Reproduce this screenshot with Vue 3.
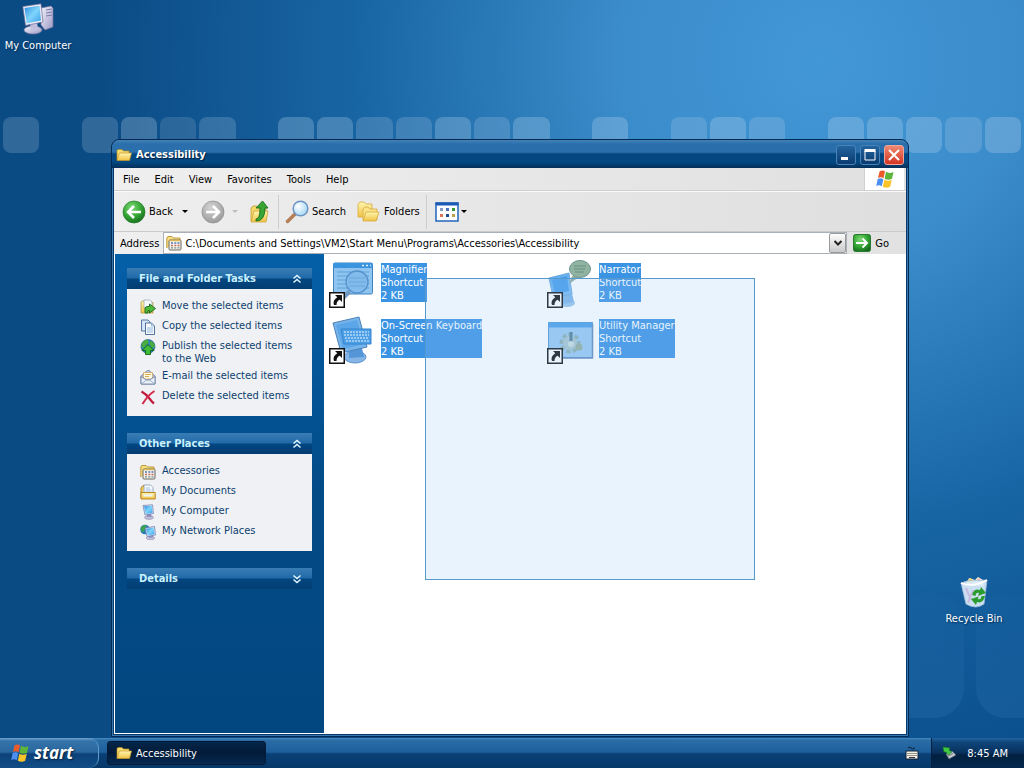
<template>
  <div class="screen">
    <!-- Shared icon shapes -->
    <svg class="sprite" aria-hidden="true">
      <defs>
        <linearGradient id="gFolder" x1="0" y1="0" x2="0" y2="1">
          <stop offset="0" stop-color="#fff6b0" />
          <stop offset="1" stop-color="#efc244" />
        </linearGradient>
        <linearGradient id="gScreen" x1="0" y1="0" x2="1" y2="1">
          <stop offset="0" stop-color="#2f8fe0" />
          <stop offset="0.5" stop-color="#7fd4fb" />
          <stop offset="1" stop-color="#3aa0ea" />
        </linearGradient>
        <linearGradient id="gCase" x1="0" y1="0" x2="1" y2="1">
          <stop offset="0" stop-color="#f6f5fc" />
          <stop offset="1" stop-color="#9a97c4" />
        </linearGradient>
        <radialGradient id="gGreen" cx="0.4" cy="0.3" r="0.75">
          <stop offset="0" stop-color="#7fd878" />
          <stop offset="0.55" stop-color="#35a835" />
          <stop offset="1" stop-color="#156a1c" />
        </radialGradient>
        <radialGradient id="gGray" cx="0.4" cy="0.3" r="0.75">
          <stop offset="0" stop-color="#d4d4d4" />
          <stop offset="1" stop-color="#989898" />
        </radialGradient>
        <radialGradient id="gLens" cx="0.35" cy="0.35" r="0.7">
          <stop offset="0" stop-color="#ffffff" />
          <stop offset="1" stop-color="#a4d8f4" />
        </radialGradient>
        <linearGradient id="gSelected" x1="0" y1="0" x2="1" y2="1">
          <stop offset="0" stop-color="#58a8ee" />
          <stop offset="1" stop-color="#83c0f2" />
        </linearGradient>
      </defs>

      <symbol id="folder" viewBox="0 0 16 16">
        <path d="M1 13V3.5L2 2.5H6L7.5 4H13V6" fill="#f7dc72" stroke="#b58a1d" stroke-width=".7" />
        <path d="M1 13.5L3.5 6H15.5L13.5 13.5Z" fill="url(#gFolder)" stroke="#c79a28" stroke-width=".7" />
      </symbol>

      <symbol id="programs" viewBox="0 0 16 16">
        <path d="M.8 13V2.5L2 1.5H6L7.5 3H14V6" fill="#f8df83" stroke="#b8902d" stroke-width=".9" />
        <rect x="3" y="5" width="12" height="10" rx="1" fill="#f3f3ee" stroke="#68675c" />
        <path d="M3.5 5.5H14.5" stroke="#d9b652" stroke-width="1.4" />
        <path d="M5 8H7M8.3 8H10.3M11.5 8H13.5" stroke="#5a78b8" stroke-width="1.6" />
        <path d="M5 10.5H7M8.3 10.5H10.3M11.5 10.5H13.5" stroke="#cc6a55" stroke-width="1.5" />
        <path d="M5 12.8H7M8.3 12.8H10.3M11.5 12.8H13.5" stroke="#728f8d" stroke-width="1.3" />
      </symbol>

      <symbol id="flag" viewBox="0 0 20 20">
        <path d="M4.5 2.5C6.5 1 8.5 1.3 10 2.3L8.5 9.3C6.7 8 5 8 3 9Z" fill="#ec5a2c" />
        <path d="M11 2.8C13.2 4.3 15.5 4.2 18.5 3L17 9.8C14.5 11 12 11 9.6 9.7Z" fill="#5fb53a" />
        <path d="M2.7 10C4.8 9 6.6 9 8.3 10.3L6.8 17.2C5 16 3.2 15.9 1.2 16.9Z" fill="#4d8ff0" />
        <path d="M9.3 10.7C11.8 12 14.2 12 16.8 10.8L15.2 17.7C12.8 19 10.3 19 7.8 17.7Z" fill="#fbc52a" />
      </symbol>

      <symbol id="computer" viewBox="0 0 32 32">
        <path d="M19 5L29 3L31 5V24L23 27L19 22Z" fill="url(#gCase)" stroke="#6f6d9c" stroke-width=".7" />
        <path d="M24 7L30 6M24 10L30 9M24 13L30 12" stroke="#716fa0" stroke-width=".9" />
        <ellipse cx="11" cy="27" rx="9" ry="4" fill="url(#gCase)" stroke="#77759f" stroke-width=".7" />
        <path d="M8 20L15 19L16 26L9 27Z" fill="#c3c0df" />
        <path d="M.8 3.5L19 .8L21 19L3.5 22.5Z" fill="#eceaf7" stroke="#6c6c98" stroke-width=".7" />
        <path d="M2.5 5L17.5 2.8L19 17.5L4.7 20.3Z" fill="url(#gScreen)" />
      </symbol>

      <symbol id="monitor" viewBox="0 0 16 16">
        <ellipse cx="9" cy="13.5" rx="4.5" ry="1.9" fill="#c1bfda" stroke="#7f7da4" stroke-width=".5" />
        <path d="M7 9H11L11.5 13H7Z" fill="#8f91bc" />
        <path d="M3 1.5L12.5 .8L13.5 9.5L5 11Z" fill="#e3e4f3" stroke="#6777a8" stroke-width=".7" />
        <path d="M4 2.3L11.8 1.8L12.6 8.8L5.7 10Z" fill="url(#gScreen)" />
      </symbol>

      <symbol id="move" viewBox="0 0 16 16">
        <path d="M1 14V3L2.5 2H6L7.5 3.5H13V14Z" fill="url(#gFolder)" stroke="#aa8f45" stroke-width=".7" />
        <path d="M4 1L10 1L12 3V9H4Z" fill="#f6f7fb" stroke="#8e93a4" stroke-width=".6" />
        <path d="M5 14V9.5Q5 7.5 8 7.5H9.5V5L15.5 9.5L9.5 14V11.5H8V14Z" fill="#4fb93c" stroke="#17691b" stroke-width=".9" />
      </symbol>

      <symbol id="copy" viewBox="0 0 16 16">
        <path d="M1.5 1H8L10 3V12H1.5Z" fill="#d5e6f8" stroke="#4b6c96" stroke-width=".9" />
        <path d="M5.5 4H11.5L14.5 7V15.5H5.5Z" fill="#f8fcff" stroke="#3f638f" stroke-width=".9" />
        <path d="M11.5 4V7H14.5M7 9H13M7 11H13M7 13H13" fill="none" stroke="#7ba5cf" stroke-width=".8" />
      </symbol>

      <symbol id="publish" viewBox="0 0 16 16">
        <circle cx="8" cy="7.5" r="7" fill="#2a7fc4" stroke="#1c5a78" stroke-width=".6" />
        <path d="M2 4Q5 0 8 1L9 4L6 6L4 9L1.5 8ZM10 2Q15 3 14.8 8L12 9L10 6Z" fill="#49ac3c" />
        <path d="M8 5.5L14 11.5H10.5V15.5H5.5V11.5H2Z" fill="#3fbb34" stroke="#126119" stroke-width=".9" />
      </symbol>

      <symbol id="mail" viewBox="0 0 16 16">
        <path d="M1 7L7.5 1.5H9L15 7V15H1Z" fill="#b7cae3" stroke="#65779d" stroke-width=".8" />
        <path d="M3.5 3.5H12.5V10H3.5Z" fill="#fffbe2" stroke="#c79c54" stroke-width=".7" />
        <path d="M5 5.5H11M5 7.5H9" stroke="#e0aa48" />
        <path d="M1 7.5L6.5 11H9.5L15 7.5V15H1Z" fill="#eaf1fb" stroke="#65779d" stroke-width=".8" />
        <path d="M1.5 14.8L6.5 11M14.5 14.8L9.5 11" stroke="#8397b9" stroke-width=".7" />
      </symbol>

      <symbol id="delete" viewBox="0 0 16 16">
        <path d="M1.5 2.5Q6 5 9 9T14 14.5" fill="none" stroke="#c2183b" stroke-width="2.2" />
        <path d="M14.5 2Q8 6 2.5 15" fill="none" stroke="#d42a4c" stroke-width="2" />
      </symbol>

      <symbol id="documents" viewBox="0 0 16 16">
        <path d="M1 14V4L3 1.5H5" fill="#f5ce5a" stroke="#b38320" />
        <path d="M4 1H10.5L13 3.5V10H4Z" fill="#fbfdff" stroke="#7d95b5" stroke-width=".8" />
        <path d="M5.5 4H10M5.5 6H11.5M5.5 8H11.5" stroke="#86a9d0" stroke-width=".8" />
        <path d="M1 8.5H15.2V15H1Z" fill="url(#gFolder)" stroke="#b98722" />
        <path d="M3.5 10.5H12.5V12.5H3.5Z" fill="#eef4fb" />
      </symbol>

      <symbol id="network" viewBox="0 0 16 16">
        <circle cx="5" cy="5.5" r="4.8" fill="#277dbb" />
        <path d="M1 3Q4 0 7 1.5L5 4L4 8L1 7Z" fill="#3fa450" />
        <ellipse cx="10.5" cy="14" rx="4.3" ry="1.7" fill="#cac8e0" stroke="#7977a0" stroke-width=".5" />
        <path d="M9 10H13V14H9Z" fill="#9599c2" />
        <path d="M5 4L14.5 2.5L15.5 11L7 12.5Z" fill="#e7e8f6" stroke="#6474a5" stroke-width=".7" />
        <path d="M6 4.8L13.7 3.6L14.5 10.3L7.8 11.5Z" fill="url(#gScreen)" />
      </symbol>

      <symbol id="arrow-badge" viewBox="0 0 16 16">
        <rect x=".75" y=".75" width="14.5" height="14.5" fill="#fff" stroke="#111" stroke-width="1.5" />
        <path d="M6 3H13V10L10.8 7.8Q7.5 9 7.5 13H5Q3.2 8.500 8.3 5.3Z" fill="#111" />
      </symbol>

      <symbol id="magnifier" viewBox="0 0 48 48">
        <rect x="4.5" y="3" width="39" height="31" rx="1.5" fill="#8fc4f0" stroke="#3f83bf" />
        <rect x="4.5" y="3" width="39" height="5" fill="#3b94de" />
        <path d="M33 5.5H35M37 5.5H39M41 5.5H42" stroke="#d9efff" stroke-width="1.5" />
        <path d="M8 12H40M8 16H40M8 20H40M8 24H40M8 28H40" stroke="#5ba3da" />
        <path d="M19 30L11 38L14 41L22 33Z" fill="#6f99c2" />
        <circle cx="28" cy="22" r="11" fill="#84bced" fill-opacity=".85" stroke="#5591ca" stroke-width="1.3" />
        <path d="M20 18H36M19 22H37M20 26H36" stroke="#66a5da" />
      </symbol>

      <symbol id="keyboard" viewBox="0 0 48 48">
        <ellipse cx="26" cy="41" rx="11" ry="6" fill="#84b5e6" stroke="#5b92cc" />
        <path d="M20 30L32 28L35 41L20 42Z" fill="#5596d8" />
        <path d="M4 7L30 1L38 31L12 37Z" fill="#78b4e8" stroke="#4a83bd" />
        <path d="M7 9L28 4L35 28L14 33Z" fill="#5aa6e8" />
        <path d="M12 13H42V28H15Z" fill="#4f9fe6" stroke="#3484cf" />
        <path d="M15 16H40M15 19H40M16 22H40M17 25H40" stroke="#b3dafa" stroke-width="1.4" stroke-dasharray="2 1" />
      </symbol>

      <symbol id="narrator" viewBox="0 0 48 48">
        <ellipse cx="20" cy="43" rx="8" ry="4" fill="#99c4ea" />
        <path d="M16 31L24 29L27 42L16 44Z" fill="#7fb6e8" />
        <path d="M2 18L22 13L25 34L6 37Z" fill="url(#gSelected)" stroke="#6ba8de" />
        <path d="M5 20L20 16L22 31L8 34Z" fill="#459ceb" />
        <path d="M25 16L22 24L32 17Z" fill="#8eab9c" />
        <ellipse cx="33" cy="9" rx="10.5" ry="8.5" fill="#91b4a0" stroke="#6d9496" />
        <path d="M27 6H39M27 9H38M28 12H37" stroke="#648e88" />
      </symbol>

      <symbol id="utility" viewBox="0 0 48 48">
        <rect x="1.5" y="6.5" width="44" height="35" fill="#9acaf3" stroke="#5397d0" />
        <rect x="1.5" y="6.5" width="44" height="5" fill="#4a9ee8" />
        <path d="M45.5 8V42H6" fill="none" stroke="#6289bc" stroke-width="1.5" />
        <circle cx="23" cy="27" r="8" fill="none" stroke="#8fb0b4" stroke-width="5" stroke-dasharray="4 2" />
        <circle cx="23" cy="27" r="7" fill="#a9c4cd" />
        <path d="M24 16V27" stroke="#527d9a" stroke-width="3" />
        <circle cx="24" cy="28" r="3" fill="#c9dedb" />
        <circle cx="32" cy="31" r="3.5" fill="#91ae9d" />
      </symbol>
    </svg>

    <main class="desktop">
      <div class="tiles" aria-hidden="true">
        <span v-for="(tone, i) in tiles" :key="i" :class="['tile', 'tone-' + tone]"></span>
      </div>
      <div class="big-tiles" aria-hidden="true"><span></span><span></span></div>

      <button class="shortcut computer" type="button">
        <svg viewBox="0 0 32 32"><use href="#computer" /></svg>
        My Computer
      </button>

      <button class="shortcut bin" type="button">
        <svg viewBox="0 0 32 32">
          <path d="M8 9L11 2L17 4L20 1L25 4L26 10Z" fill="#fbf4d8" />
          <path d="M8 6L13 2L16 8Z" fill="#f2cf51" />
          <path d="M19 3L22 2L24 7L20 8Z" fill="#efb9bd" />
          <path d="M3 7L9 5L29 4L26 28Q18 34 8 28Z" fill="#dbeafa" fill-opacity=".92" stroke="#a3bfdc" stroke-width=".8" />
          <path d="M3 7Q16 12 29 4" fill="none" stroke="#fff" stroke-width="1.6" />
          <path d="M8 12L13 24M10 27L15 14" stroke="#c9badf" stroke-width="2" />
          <path d="M14 19Q16 12 22 14L23 11L28 17L20 20L21 17Q18 16 17.5 20Z" fill="#2b9c2f" />
          <path d="M27 20Q25 28 19 26L18 29L13 23L20.5 20.5L20 23Q23 24 23.5 20Z" fill="#2b9c2f" />
        </svg>
        Recycle Bin
      </button>

      <section class="window" aria-label="Accessibility">
        <header class="titlebar">
          <svg class="icon16"><use href="#folder" /></svg>
          <h1>Accessibility</h1>
          <button type="button" class="frame-btn" aria-label="Minimize">
            <svg viewBox="0 0 18 18"><path d="M4 12.5H11" stroke="#fff" stroke-width="3" /></svg>
          </button>
          <button type="button" class="frame-btn" aria-label="Maximize">
            <svg viewBox="0 0 18 18"><path d="M4 5H14V14H4Z" fill="none" stroke="#fff" /><path d="M3.5 4.5H14.5" stroke="#fff" stroke-width="3" /></svg>
          </button>
          <button type="button" class="frame-btn close" aria-label="Close">
            <svg viewBox="0 0 18 18"><path d="M4 4L14 14M14 4L4 14" stroke="#fff" stroke-width="2" /></svg>
          </button>
        </header>

        <nav class="menubar">
          <button v-for="item in menu" :key="item" type="button">{{ item }}</button>
          <span class="brand"><svg viewBox="0 0 20 20"><use href="#flag" /></svg></span>
        </nav>

        <div class="toolbar">
          <button type="button" class="tool">
            <svg class="icon24" viewBox="0 0 24 24">
              <circle cx="12" cy="12" r="11" fill="url(#gGreen)" stroke="#277a2b" stroke-width=".7" />
              <path d="M19 12H6.5M12 6L6 12L12 18" fill="none" stroke="#fff" stroke-width="2.6" />
            </svg>
            Back
          </button>
          <button type="button" class="drop" aria-label="Back history"><i class="caret"></i></button>
          <button type="button" class="tool forward" aria-label="Forward">
            <svg class="icon24" viewBox="0 0 24 24">
              <circle cx="12" cy="12" r="11" fill="url(#gGray)" stroke="#8d8d8d" stroke-width=".7" />
              <path d="M5 12H17.5M12 6L18 12L12 18" fill="none" stroke="#fff" stroke-width="2.6" />
            </svg>
          </button>
          <button type="button" class="drop off" aria-label="Forward history"><i class="caret"></i></button>
          <button type="button" class="tool up" aria-label="Up">
            <svg class="icon24" viewBox="0 0 24 24">
              <path d="M3 21V8L5 6H9L11 8H18V20Z" fill="#f4d769" stroke="#c39c36" stroke-width=".8" />
              <path d="M3 22L6 11H20L18 22Z" fill="url(#gFolder)" stroke="#cba43c" stroke-width=".8" />
              <path d="M8 19Q12 19 12 8H8L14.5 1L20 8H17Q17 21 8 21Z" fill="#38a534" stroke="#1b6f20" stroke-width=".9" />
            </svg>
          </button>
          <span class="divider"></span>
          <button type="button" class="tool">
            <svg class="icon24" viewBox="0 0 24 24">
              <path d="M10 14L2.5 21.5" stroke="#b58057" stroke-width="3.5" stroke-linecap="round" />
              <circle cx="15.5" cy="8.5" r="7.3" fill="url(#gLens)" stroke="#6d94c4" stroke-width="1.5" />
            </svg>
            Search
          </button>
          <button type="button" class="tool folders">
            <svg class="icon24" viewBox="0 0 24 24">
              <path d="M1 17V4L3 2H7L9 4H15V17Z" fill="url(#gFolder)" stroke="#d9a93a" stroke-width=".8" />
              <path d="M6 20V9L8 7H11L13 9H20V20Z" fill="#f9e28a" stroke="#d9a93a" stroke-width=".8" />
              <path d="M6 21L9 12H22L19 21Z" fill="url(#gFolder)" stroke="#d9a93a" stroke-width=".8" />
            </svg>
            Folders
          </button>
          <span class="divider"></span>
          <button type="button" class="tool views" aria-label="Views">
            <svg class="icon24" viewBox="0 0 24 24">
              <rect x="1" y="3" width="22" height="18" fill="#fff" stroke="#2266bb" stroke-width="1.5" />
              <path d="M.5 4H23.5" stroke="#1c5ab4" stroke-width="3" />
              <path d="M5 9.5H8" stroke="#8b9ac4" stroke-width="3" />
              <path d="M11 9.5H14" stroke="#4b72bf" stroke-width="3" />
              <path d="M17 9.5H20" stroke="#389637" stroke-width="3" />
              <path d="M5 15.5H8" stroke="#db765c" stroke-width="3" />
              <path d="M11 15.5H14" stroke="#1c4b90" stroke-width="3" />
              <path d="M17 15.5H20" stroke="#bda447" stroke-width="3" />
            </svg>
            <i class="caret"></i>
          </button>
        </div>

        <form class="address" @submit.prevent>
          <label for="path">Address</label>
          <div class="field">
            <svg class="icon16"><use href="#programs" /></svg>
            <input id="path" v-model="path" type="text" spellcheck="false" />
            <button type="button" class="combo" aria-label="Show addresses">
              <svg viewBox="0 0 10 10"><path d="M1.5 3L5 6.5L8.5 3" fill="none" stroke="#222" stroke-width="2" /></svg>
            </button>
          </div>
          <button type="submit" class="go">
            <svg viewBox="0 0 18 18">
              <rect x=".5" y=".5" width="17" height="17" rx="2" fill="url(#gGreen)" stroke="#2b7b2f" />
              <path d="M3 9H14M9.5 4.5L14 9L9.5 13.5" fill="none" stroke="#fff" stroke-width="2" />
            </svg>
            Go
          </button>
        </form>

        <div class="body">
          <aside class="sidebar">
            <section v-for="panel in panels" :key="panel.title" class="panel">
              <h2>
                <button type="button" @click="panel.open = !panel.open">
                  {{ panel.title }}
                  <svg :class="{ down: !panel.open }" viewBox="0 0 10 10">
                    <path d="M1.5 4.5L5 1.5L8.5 4.5M1.5 8.5L5 5.5L8.5 8.5" fill="none" stroke="#e2f8ff" stroke-width="1.5" />
                  </svg>
                </button>
              </h2>
              <ul v-if="panel.open">
                <li v-for="link in panel.links" :key="link.text">
                  <a href="#" @click.prevent>
                    <svg class="icon16"><use :href="'#' + link.icon" /></svg>
                    <span>{{ link.text }}</span>
                  </a>
                </li>
              </ul>
            </section>
          </aside>

          <div class="content">
            <ul class="files">
              <li v-for="file in files" :key="file.name">
                <span class="file-icon">
                  <svg viewBox="0 0 48 48"><use :href="'#' + file.icon" /></svg>
                  <svg class="badge"><use href="#arrow-badge" /></svg>
                </span>
                <span class="file-label">{{ file.name }}<br />Shortcut<br />2 KB</span>
              </li>
            </ul>
            <div class="marquee"></div>
          </div>
        </div>
      </section>
    </main>

    <footer class="taskbar">
      <button type="button" class="start">
        <svg viewBox="0 0 20 20"><use href="#flag" /></svg>
        start
      </button>
      <button type="button" class="task">
        <svg class="icon16"><use href="#folder" /></svg>
        Accessibility
      </button>
      <svg class="lang" viewBox="0 0 14 14">
        <path d="M3 2Q5 0 6 2T10 2" fill="none" stroke="#061c33" />
        <rect x="1" y="5" width="12" height="8" fill="#f4f2e4" stroke="#10243a" />
        <path d="M2.5 7.5H12M2.5 9.5H12" stroke="#333" stroke-dasharray="1 1" />
        <path d="M4 11.5H10" stroke="#333" />
      </svg>
      <div class="tray">
        <svg class="icon16" viewBox="0 0 16 16">
          <path d="M5 9L11 6L15 10L8 14Z" fill="#c5cad2" stroke="#59636e" stroke-width=".7" />
          <path d="M7 11L12 8.5" stroke="#69727c" />
          <path d="M2 2L9 3L8 5L11 7L7 10L5 7L3 7Z" fill="#43c643" stroke="#187d24" stroke-width=".6" />
        </svg>
        <time>8:45 AM</time>
      </div>
    </footer>
  </div>
</template>

<script setup>
import { ref } from 'vue';

const path = ref('C:\\Documents and Settings\\VM2\\Start Menu\\Programs\\Accessories\\Accessibility');

const menu = ['File', 'Edit', 'View', 'Favorites', 'Tools', 'Help'];

// 0 = empty, 1 = faint, 2 = medium, 3 = bright
const tiles = [2, 0, 2, 3, 1, 2, 0, 3, 3, 2, 2, 3, 2, 3, 0, 3, 0, 2, 3, 2, 0, 3, 3, 3, 2, 3];

const panels = ref([
  {
    title: 'File and Folder Tasks',
    open: true,
    links: [
      { icon: 'move', text: 'Move the selected items' },
      { icon: 'copy', text: 'Copy the selected items' },
      { icon: 'publish', text: 'Publish the selected items to the Web' },
      { icon: 'mail', text: 'E-mail the selected items' },
      { icon: 'delete', text: 'Delete the selected items' },
    ],
  },
  {
    title: 'Other Places',
    open: true,
    links: [
      { icon: 'programs', text: 'Accessories' },
      { icon: 'documents', text: 'My Documents' },
      { icon: 'monitor', text: 'My Computer' },
      { icon: 'network', text: 'My Network Places' },
    ],
  },
  { title: 'Details', open: false, links: [] },
]);

const files = [
  { icon: 'magnifier', name: 'Magnifier' },
  { icon: 'narrator', name: 'Narrator' },
  { icon: 'keyboard', name: 'On-Screen Keyboard' },
  { icon: 'utility', name: 'Utility Manager' },
];
</script>

<style>
body {
  margin: 0;
}
</style>

<style scoped>
.screen {
  display: flex;
  flex-direction: column;
  min-height: 100vh;
  font-family: Tahoma, "DejaVu Sans Condensed", sans-serif;
  font-size: 11px;
  line-height: 13px;
  color: #000;
}

.sprite {
  position: absolute;
  width: 0;
  height: 0;
}

button {
  margin: 0;
  padding: 0;
  border: 0;
  background: none;
  font: inherit;
  color: inherit;
}

ul {
  margin: 0;
  padding: 0;
  list-style: none;
}

svg {
  display: block;
  flex: none;
}

.icon16 {
  width: 16px;
  height: 16px;
}

.icon24 {
  width: 24px;
  height: 24px;
}

/* Desktop */
.desktop {
  position: relative;
  flex: 1;
  overflow: hidden;
  background:
    radial-gradient(ellipse 720px 720px at 820px 60px, #4297d6 0%, #3b8cca 28%, rgba(29, 109, 172, 0.75) 65%, rgba(12, 78, 136, 0) 100%),
    linear-gradient(90deg, #0b4b84, #0a4f8e);
}

.tiles {
  display: grid;
  grid-template-columns: repeat(26, 1fr);
  gap: 3px;
  padding: 117px 3px 0;
}

.tile {
  height: 36px;
  border-radius: 8px;
}

.tone-1 {
  background: rgba(255, 255, 255, 0.12);
}

.tone-2 {
  background: rgba(200, 220, 240, 0.2);
}

.tone-3 {
  background: rgba(200, 225, 245, 0.26);
}

.big-tiles {
  position: absolute;
  right: -66px;
  bottom: 20px;
  display: flex;
  gap: 12px;
}

.big-tiles span {
  width: 114px;
  height: 124px;
  border-radius: 30px;
  background: linear-gradient(rgba(90, 160, 215, 0.02), rgba(90, 160, 215, 0.12));
}

.shortcut {
  position: absolute;
  display: flex;
  flex-direction: column;
  align-items: center;
  gap: 4px;
  width: 76px;
  color: #fff;
  text-shadow: 1px 1px 2px #002a52;
}

.shortcut svg {
  width: 32px;
  height: 32px;
}

.computer {
  left: 0;
  top: 3px;
}

.bin {
  right: 12px;
  top: 576px;
}

/* Window */
.window {
  position: absolute;
  top: 139px;
  right: 115px;
  bottom: 1px;
  left: 111px;
  display: flex;
  flex-direction: column;
  box-sizing: border-box;
  padding: 0 2px 2px;
  border: 1px solid #032a52;
  border-radius: 8px 8px 0 0;
  background: #05396c;
  box-shadow: inset 1px 1px 0 #3a78b0, inset -1px -1px 0 #3a78b0;
}

.titlebar {
  display: flex;
  align-items: center;
  gap: 4px;
  box-sizing: border-box;
  height: 28px;
  margin: 0 -2px;
  padding: 2px 4px 0;
  border-radius: 7px 7px 0 0;
  background: linear-gradient(#4282b8 0, #2a6fac 4px, #2b70ac 12px, #034680 14px, #034982 22px, #052f5a 28px);
  color: #fff;
}

.titlebar h1 {
  flex: 1;
  margin: 0;
  font-size: 11px;
  line-height: 14px;
  font-weight: bold;
  text-shadow: 1px 1px 1px #001f40;
}

.frame-btn {
  width: 20px;
  height: 20px;
  border: 1px solid #4684b8;
  border-radius: 3px;
  background: linear-gradient(#24649f, #0a3b70);
}

.frame-btn svg {
  width: 18px;
  height: 18px;
}

.close {
  border-color: #f0a595;
  background: linear-gradient(#ee8872, #d23523);
}

.menubar {
  display: flex;
  align-items: stretch;
  height: 22px;
  padding-left: 2px;
  border-bottom: 1px solid #cfcfcf;
  background: linear-gradient(90deg, #efefef, #e0e0e0);
}

.menubar button {
  padding: 0 8px 0 7px;
}

.brand {
  display: grid;
  place-items: center;
  width: 39px;
  margin-left: auto;
  margin-right: 2px;
  border-left: 1px solid #d0d0d0;
  background: #fff;
}

.brand svg {
  width: 20px;
  height: 20px;
}

.toolbar {
  display: flex;
  align-items: center;
  height: 39px;
  padding-left: 8px;
  border-top: 1px solid #fafafa;
  border-bottom: 1px solid #cbcbcb;
  background: linear-gradient(90deg, #eeeeee, #dfdfdf);
}

.tool {
  display: flex;
  align-items: center;
  gap: 3px;
}

.drop {
  width: 24px;
  display: grid;
  place-items: center;
}

.forward {
  margin-left: 4px;
}

.caret {
  width: 0;
  height: 0;
  border: 3px solid transparent;
  border-top-color: #000;
  border-bottom: 0;
}

.off {
  width: 20px;
}

.off .caret {
  border-top-color: #bdbdbd;
}

.up {
  margin-left: 3px;
}

.divider {
  width: 1px;
  height: 34px;
  margin: 0 6px;
  background: #cdcdcd;
}

.folders {
  margin-left: 11px;
}

.divider + .views {
  gap: 2px;
  margin-left: 2px;
}

.address {
  display: flex;
  align-items: center;
  height: 22px;
  padding: 0 17px 0 6px;
  background: linear-gradient(90deg, #efefef, #e2e2e2);
}

.field {
  flex: 1;
  display: flex;
  align-items: center;
  height: 20px;
  margin-left: 4px;
  padding-left: 2px;
  border: 1px solid #a9b0b8;
  background: #fff;
}

.field input {
  flex: 1;
  min-width: 0;
  padding: 0 3px;
  border: 0;
  outline: 0;
  background: none;
  font: inherit;
}

.combo {
  display: grid;
  place-items: center;
  width: 17px;
  height: 20px;
  border: 1px solid #9a9a9a;
  border-radius: 2px;
  background: linear-gradient(#fdfdfd, #c9c9c9);
}

.combo svg {
  width: 10px;
  height: 10px;
}

.go {
  display: flex;
  align-items: center;
  gap: 4px;
  margin-left: 6px;
}

.go svg {
  width: 18px;
  height: 18px;
}

.body {
  flex: 1;
  display: flex;
  min-height: 0;
  border: solid #fff;
  border-width: 0 1px 1px;
}

/* Sidebar */
.sidebar {
  display: flex;
  flex: none;
  flex-direction: column;
  gap: 17px;
  width: 185px;
  padding: 14px 12px;
  background: linear-gradient(#0560a8, #034b87 50%, #034780);
}

.panel h2 {
  margin: 0;
  font-size: 11px;
  font-weight: bold;
}

.panel h2 button {
  display: flex;
  align-items: center;
  justify-content: space-between;
  width: 100%;
  height: 21px;
  padding: 0 10px 0 12px;
  background: linear-gradient(#3a7db5 0, #216aa8 10px, #034680 11px, #033d72 21px);
  color: #c9f1ff;
}

.panel h2 svg {
  width: 10px;
  height: 10px;
}

.panel .down {
  transform: rotate(180deg);
}

.panel ul {
  display: flex;
  flex-direction: column;
  gap: 4px;
  padding: 10px 13px 11px;
  background: #eff1f5;
}

.panel a {
  display: flex;
  gap: 6px;
  color: #0d3f6e;
  text-decoration: none;
}

/* File list */
.content {
  position: relative;
  flex: 1;
  background: #fff;
}

.files {
  display: grid;
  grid-template-columns: repeat(auto-fill, 218px);
  grid-auto-rows: 56px;
  max-width: 500px;
  padding: 6px 5px;
}

.files li {
  display: flex;
  align-items: flex-start;
  gap: 4px;
}

.file-icon {
  position: relative;
  width: 48px;
  height: 48px;
}

.badge {
  position: absolute;
  left: 0;
  bottom: 0;
  width: 16px;
  height: 16px;
}

.file-label {
  margin-top: 3px;
  background: #3b93e3;
  color: #fff;
}

.marquee {
  position: absolute;
  left: 101px;
  top: 24px;
  width: 328px;
  height: 300px;
  border: 1px solid #5799cb;
  background: rgba(150, 200, 245, 0.22);
}

/* Taskbar */
.taskbar {
  display: flex;
  align-items: center;
  height: 30px;
  background: linear-gradient(#4a8bc0 0, #2b6da6 2px, #1d5f9b 14px, #0a4076 16px, #07386a 30px);
  color: #fff;
}

.start {
  display: flex;
  align-items: center;
  gap: 4px;
  box-sizing: border-box;
  width: 99px;
  height: 30px;
  padding-left: 10px;
  border-right: 1px solid #5e9bcb;
  border-radius: 0 10px 10px 0;
  background: linear-gradient(#6fa3cc 0, #3474aa 3px, #2a679e 14px, #0c4279 16px, #124d86 30px);
  font-family: "Open Sans", sans-serif;
  font-size: 17px;
  line-height: 22px;
  font-weight: bold;
  font-style: italic;
  text-shadow: 1px 1px 2px #00213f;
}

.start svg {
  width: 20px;
  height: 20px;
}

.task {
  display: flex;
  align-items: center;
  gap: 4px;
  box-sizing: border-box;
  width: 159px;
  height: 24px;
  margin-left: 8px;
  padding-left: 8px;
  border: 1px solid #021a36;
  border-radius: 3px;
  background: linear-gradient(#04264a, #021a38 50%, #052a52);
}

.lang {
  width: 14px;
  height: 14px;
  margin-left: auto;
  margin-right: 12px;
}

.tray {
  display: flex;
  align-items: center;
  gap: 10px;
  height: 30px;
  padding: 0 16px 0 9px;
  border-left: 1px solid #02203f;
  background: linear-gradient(#2565a0 0, #0f467c 4px, #08305c 15px, #02203f 17px, #04284d 30px);
}
</style>
